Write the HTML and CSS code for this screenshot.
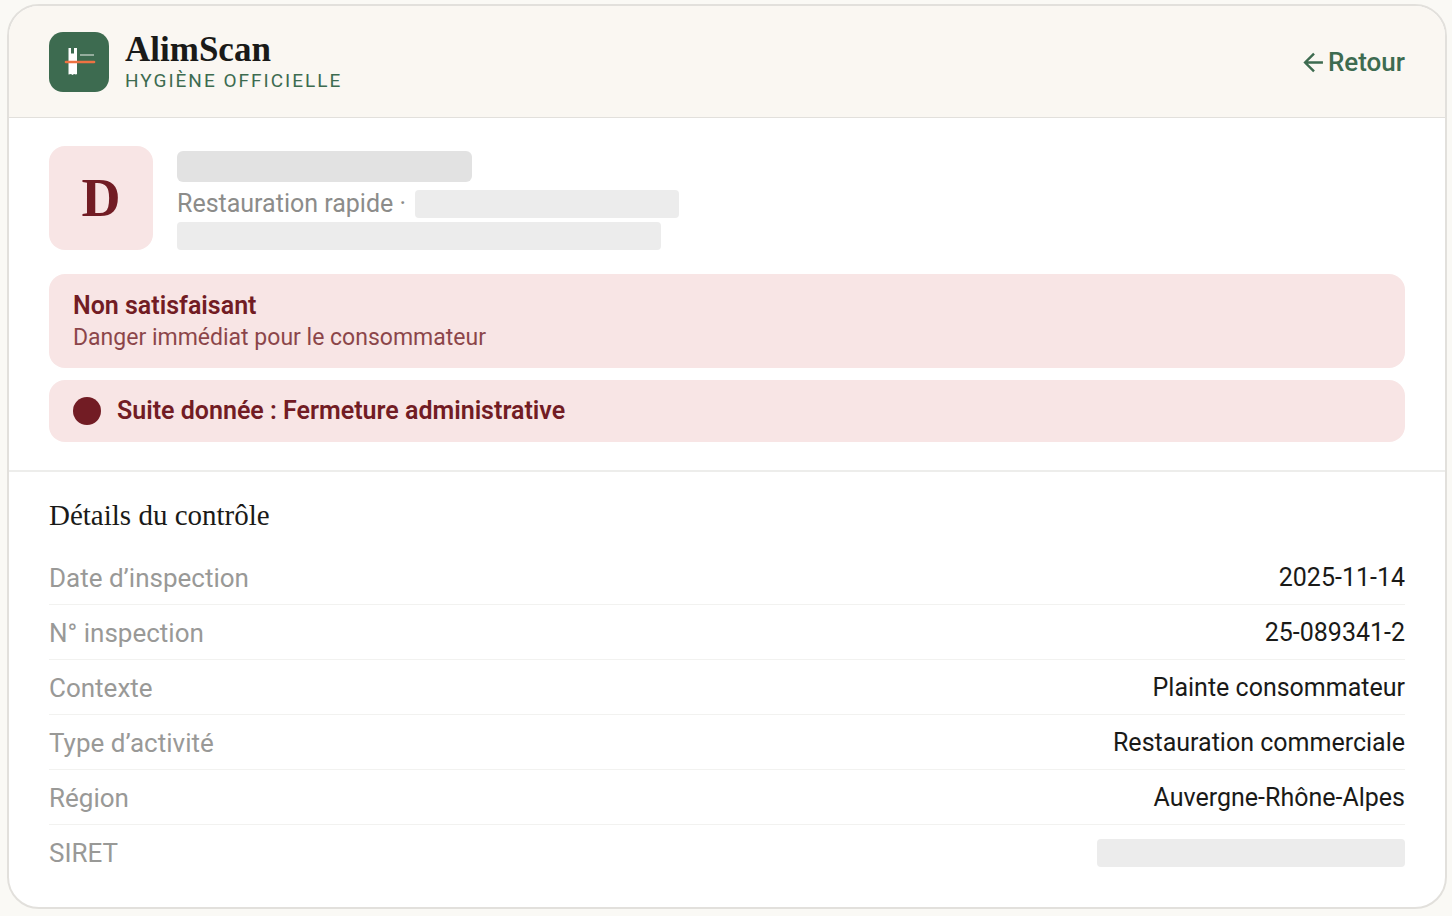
FILE: index.html
```html
<!DOCTYPE html>
<html lang="fr">
<head>
<meta charset="utf-8">
<meta name="viewport" content="width=device-width, initial-scale=1">
<title>AlimScan</title>
<link rel="stylesheet" href="styles.css">
</head>
<body>
<main class="card">
  <header class="header">
    <div class="brand">
      <svg class="logo" viewBox="0 0 60 60" aria-hidden="true">
        <rect width="60" height="60" rx="14" fill="#3d6b50"/>
        <path d="M19.5 16H22v5.5h3V16h3v26l-1 .5-2-.5-1.500 1-1.500-1-2.500.5z" fill="#fff"/>
        <path d="M31 23h14" stroke="#94ad9d" stroke-width="2"/>
        <path d="M17 30h28" stroke="#ee7242" stroke-width="2.600" stroke-linecap="round"/>
      </svg>
      <div class="brand-text">
        <span class="brand-name">AlimScan</span>
        <span class="brand-tag">HYGIÈNE OFFICIELLE</span>
      </div>
    </div>
    <a class="back" href="#"><svg class="arrow" viewBox="0 0 20 20" aria-hidden="true"><path d="M19 10H2M10.500 1.500L2 10l8.500 8.500" fill="none" stroke="currentColor" stroke-width="2.300"/></svg>Retour</a>
  </header>

  <section class="summary">
    <div class="place">
      <div class="grade">D</div>
      <div class="place-info">
        <span class="mask mask-name"></span>
        <div class="place-line"><span>Restauration rapide ·</span><span class="mask mask-city"></span></div>
        <span class="mask mask-address"></span>
      </div>
    </div>
    <div class="alerts">
      <div class="alert alert-level">
        <strong class="alert-title">Non satisfaisant</strong>
        <span class="alert-text">Danger immédiat pour le consommateur</span>
      </div>
      <div class="alert alert-action">
        <span class="dot"></span>
        <strong class="alert-title">Suite donnée : Fermeture administrative</strong>
      </div>
    </div>
  </section>

  <section class="details">
    <h2 class="details-title">Détails du contrôle</h2>
    <dl class="rows">
      <div class="row"><dt>Date d’inspection</dt><dd>2025-11-14</dd></div>
      <div class="row"><dt>N° inspection</dt><dd>25-089341-2</dd></div>
      <div class="row"><dt>Contexte</dt><dd>Plainte consommateur</dd></div>
      <div class="row"><dt>Type d’activité</dt><dd>Restauration commerciale</dd></div>
      <div class="row"><dt>Région</dt><dd>Auvergne-Rhône-Alpes</dd></div>
      <div class="row"><dt>SIRET</dt><dd><span class="mask mask-siret"></span></dd></div>
    </dl>
  </section>
</main>
</body>
</html>
```
FILE: styles.css
```css
* { box-sizing: border-box; }

body {
  margin: 0;
  padding: 4px 5px 7px 7px;
  background: #faf9f5;
  color: #1a1a18;
  font-family: Roboto, "Liberation Sans", sans-serif;
  font-size: 25px;
  line-height: 32px;
}

.card {
  overflow: hidden;
  background: #fff;
  border: 2px solid #e2e0dc;
  border-radius: 32px;
}

.header {
  display: flex;
  align-items: center;
  justify-content: space-between;
  padding: 25px 40px 24px;
  background: #faf7f2;
  border-bottom: 1px solid #e2e0dc;
}

.brand {
  display: flex;
  align-items: center;
  gap: 16px;
}

.logo {
  width: 60px;
  height: 60px;
}

.brand-text {
  display: flex;
  flex-direction: column;
}

.brand-name {
  font-family: "Liberation Serif", serif;
  font-size: 35px;
  font-weight: 700;
  line-height: 38px;
}

.brand-tag {
  color: #3d6b50;
  font-size: 19px;
  line-height: 24px;
  letter-spacing: 2px;
}

.back {
  display: flex;
  align-items: center;
  gap: 4px;
  color: #3d6b50;
  font-size: 26px;
  font-weight: 500;
  text-decoration: none;
}

.arrow {
  width: 21px;
  height: 21px;
}

.summary {
  padding: 28px 40px;
  border-bottom: 2px solid #ededeb;
}

.place {
  display: flex;
  gap: 24px;
  margin-bottom: 24px;
}

.grade {
  display: grid;
  place-items: center;
  width: 104px;
  height: 104px;
  border-radius: 16px;
  background: #f8e5e5;
  color: #721c24;
  font-family: "Liberation Serif", serif;
  font-size: 54px;
  font-weight: 700;
}

.place-info {
  display: flex;
  flex-direction: column;
  justify-content: flex-end;
  color: #8c8c8a;
}

.place-line {
  display: flex;
  align-items: center;
  gap: 9px;
  height: 28px;
  margin: 8px 0 4px;
}

.mask {
  display: block;
  height: 28px;
  border-radius: 4px;
  background: #ececec;
}

.mask-name {
  width: 295px;
  height: 31px;
  border-radius: 6px;
  background: #e2e2e2;
}

.mask-city { width: 264px; }
.mask-address { width: 484px; }
.mask-siret { width: 308px; }

.alerts {
  display: grid;
  gap: 12px;
}

.alert {
  display: flex;
  padding: 16px 24px 14px;
  border-radius: 16px;
  background: #f8e5e5;
  color: #721c24;
}

.alert-level { flex-direction: column; }

.alert-action {
  align-items: center;
  gap: 16px;
  padding: 15px 24px;
}

.alert-title { font-weight: 600; }

.alert-text {
  font-size: 23px;
  opacity: 0.8;
}

.dot {
  width: 28px;
  height: 28px;
  border-radius: 50%;
  background: #721c24;
}

.details { padding: 27px 40px 28px; }

.details-title {
  margin: 0 0 19px;
  font-family: "Liberation Serif", serif;
  font-size: 29px;
  font-weight: 400;
}

.rows { margin: 0; }

.row {
  display: flex;
  align-items: center;
  justify-content: space-between;
  height: 55px;
  padding-top: 2px;
  border-bottom: 1px solid #f2f2f0;
}

.row:last-child {
  height: 54px;
  border-bottom: 0;
}

dt {
  color: #999997;
  font-size: 26px;
}

dd { margin: 0; }
```
